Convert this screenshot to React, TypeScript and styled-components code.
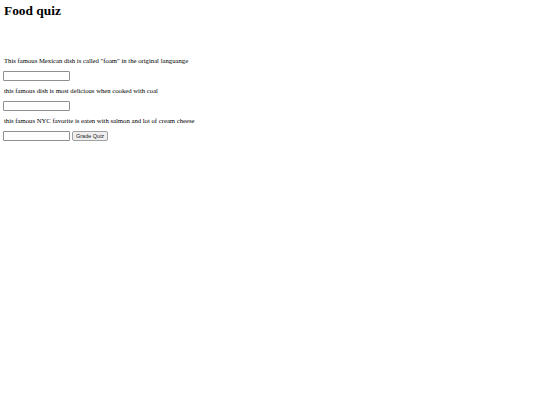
import styled, { createGlobalStyle } from "styled-components"

const GlobalStyle = createGlobalStyle`
  html, body {
    margin: 0;
    padding: 0;
    background: #ffffff;
  }
  body {
    font-family: "Liberation Serif", "Times New Roman", serif;
    color: #000000;
  }
`

const Page = styled.div`
  padding: 1px 3px;
`

const Title = styled.h1`
  margin: 0 0 0 1px;
  font-size: 13.4px;
  line-height: 20px;
  font-weight: bold;
`

const Form = styled.form`
  display: flex;
  flex-direction: column;
  align-items: flex-start;
  margin-top: 35px;
`

const Question = styled.p`
  margin: 0 0 6px 1px;
  font-size: 6.7px;
  line-height: 9px;
`

const Row = styled.div`
  display: flex;
  align-items: center;
  gap: 2px;
  margin-bottom: 5px;
`

const Answer = styled.input`
  box-sizing: border-box;
  width: 67px;
  height: 10px;
  margin: 0;
  padding: 0 2px;
  border: 1px solid #8f8f8f;
  border-radius: 1px;
  background: #ffffff;
  font-size: 6px;
`

const GradeButton = styled.button`
  box-sizing: border-box;
  height: 10px;
  margin: 0;
  padding: 0 3px;
  border: 1px solid #a0a0a0;
  border-radius: 2px;
  background: #efefef;
  color: #222222;
  font-family: "Liberation Sans", Arial, sans-serif;
  font-size: 5.5px;
  line-height: 8px;
`

const questions = [
  'This famous Mexican dish is called "foam" in the original languange',
  "this famous dish is most delicious when cooked with coal",
  "this famous NYC favorite is eaten with salmon and lot of cream cheese",
]

export default function App() {
  return (
    <>
      <GlobalStyle />
      <Page>
        <Title>Food quiz</Title>
        <Form onSubmit={(e) => e.preventDefault()}>
          {questions.map((q, i) => (
            <div key={i}>
              <Question>{q}</Question>
              <Row>
                <Answer type="text" />
                {i === questions.length - 1 && (
                  <GradeButton type="submit">Grade Quiz</GradeButton>
                )}
              </Row>
            </div>
          ))}
        </Form>
      </Page>
    </>
  )
}
